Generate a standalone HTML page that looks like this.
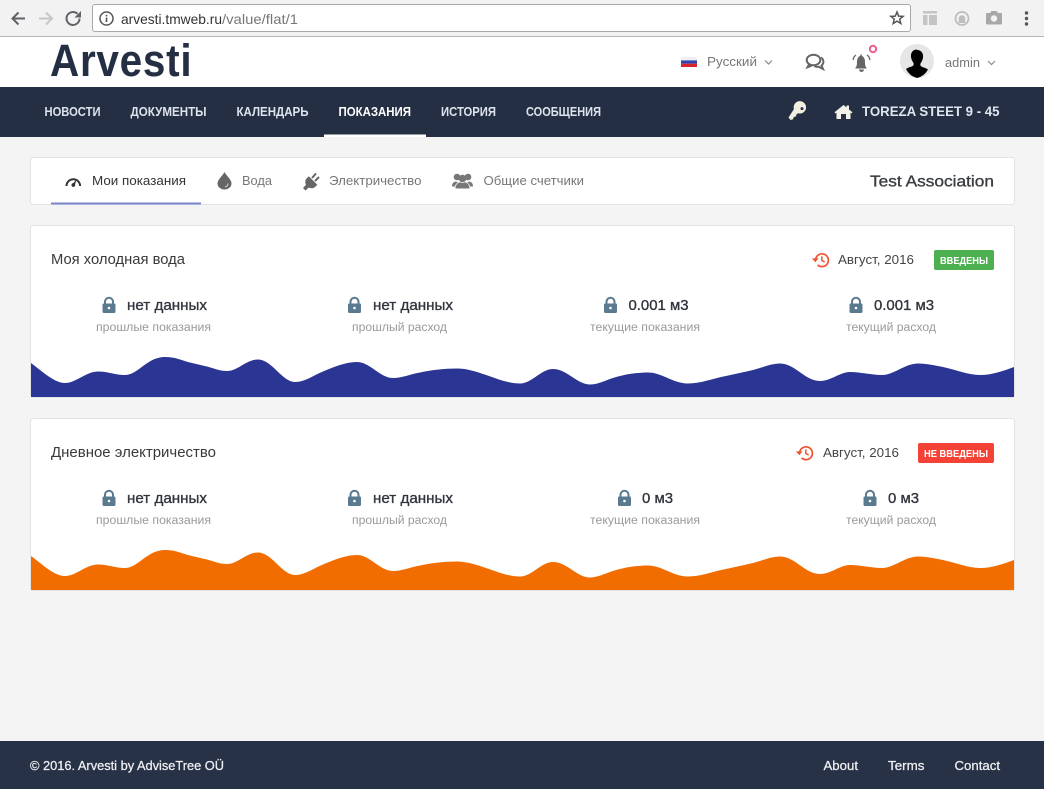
<!DOCTYPE html>
<html lang="ru">
<head>
<meta charset="utf-8">
<title>Arvesti</title>
<style>
html,body{margin:0;padding:0;background:#f4f4f4;width:1044px;height:789px;overflow:hidden}
svg{display:block;position:absolute;left:0;top:0}
text{font-family:"Liberation Sans",Arial,sans-serif;white-space:pre}
.nav{font-size:13px;font-weight:bold;fill:#dce3ec}
.tab{font-size:13px;fill:#777}
.val{font-size:14.5px;fill:#32353d;stroke:#32353d;stroke-width:.35px}
.sub{font-size:11.5px;fill:#9a9a9a}
.ttl{font-size:14.5px;fill:#3a3a3a}
.dt{font-size:13px;fill:#444}
.bdg{font-size:10px;font-weight:bold;fill:#fff}
.ft{font-size:13px;fill:#eef0f3;stroke:#eef0f3;stroke-width:.25px}
</style>
</head>
<body>
<svg width="1044" height="789" viewBox="0 0 1044 789" xmlns="http://www.w3.org/2000/svg">
<defs>
<path id="wave" d="M31 363C42 371 54 383 65 383C76 383 86 371.500 98 371.500C108 371.500 115 375 125 375C138 375 147 357 165 357C175 357 181 360 187 361.700C195 363.700 201 365 207 366.500C214 368.500 220 371 227 371C238 371 246 359.500 258 359.500C272 359.500 282 382 295 382C305 382 314 375 323 371.500C335 366.500 346 362 357 362C370 362 380 378 393 378C402 378 411 374 420 372.500C431 370 444 368.500 457 368.500C478 368.500 500 383.500 520 383.500C532 383.500 541 369 553 369C567 369 577 384.500 590 384.500C599 384.500 608 379 617 376.800C627 374 638 372.500 648 372.500C662 372.500 673 383.500 688 383.500C699 383.500 709 380 720 377.300C732 374.500 743 372.500 753 370C763 367.500 771 363.500 780 363.500C795 363.500 805 381 820 381C831 381 840 372 850 372C861 372 871 375 882 375C894 375 905 363.500 918 363.500C927 363.500 935 365.500 943 367C957 370 968 375 980 375C992 375 1003 371 1014 367V397H31Z"/>
<g id="lock"><path d="M3 7V4.800a4 4 0 0 1 8 0V7" fill="none" stroke="#5a7a90" stroke-width="2"/><rect x="0.500" y="6.500" width="13" height="9.500" rx="1.200" fill="#5a7a90"/><circle cx="7" cy="11" r="1.300" fill="#fff"/></g>
<g id="hist" fill="none" stroke="#f0532d" stroke-width="1.700"><path d="M3.600 8a6.400 6.400 0 1 1 2 4.900"/><path d="M0 6.400h6.600L3.300 10.200z" fill="#f0532d" stroke="none"/><path d="M9.800 4.400v4.100l2.900 1.400" stroke-width="1.500"/></g>
</defs>

<!-- browser chrome -->
<rect width="1044" height="37" fill="#f2f2f2"/>
<rect y="36" width="1044" height="1" fill="#b5b5b5"/>
<rect x="92.500" y="4.500" width="818" height="27" rx="2.500" fill="#fff" stroke="#a9a9a9"/>
<g fill="none" stroke="#5f6368" stroke-width="2">
<path d="M25 18.500H13M18.500 12.500l-6 6 6 6"/>
<path d="M39 18.500h12M46 12.500l6 6-6 6" stroke="#c6c6c6"/>
<path d="M79.500 18.500a6.500 6.500 0 1 1-2-4.700"/>
</g>
<path d="M81 11v6.500h-6.500z" fill="#5f6368"/>
<circle cx="106.500" cy="18.500" r="6.500" fill="none" stroke="#555" stroke-width="1.500"/>
<rect x="105.700" y="17.500" width="1.600" height="4.500" fill="#555"/><rect x="105.700" y="14.800" width="1.600" height="1.600" fill="#555"/>
<text x="121" y="24" font-size="14" fill="#333" textLength="101" lengthAdjust="spacingAndGlyphs">arvesti.tmweb.ru</text>
<text x="222" y="24" font-size="14" fill="#777" textLength="76" lengthAdjust="spacingAndGlyphs">/value/flat/1</text>
<path d="M897 12l1.700 4.100 4.400.3-3.400 2.800 1.100 4.300-3.800-2.400-3.800 2.400 1.100-4.300-3.400-2.800 4.400-.3z" fill="none" stroke="#555" stroke-width="1.500"/>
<path d="M923 11h14v2.500h-14zM923 15h4.500v10H923zM929 15h8v10h-8z" fill="#c4c4c4"/>
<circle cx="962" cy="18.500" r="6.500" fill="none" stroke="#bdbdbd" stroke-width="1.800"/><path d="M958.800 23v-4.500a3.200 3.200 0 0 1 6.400 0V23z" fill="#bdbdbd"/>
<path d="M987 13h3l1.500-2h5l1.500 2h3a1 1 0 0 1 1 1v9.500a1 1 0 0 1-1 1h-14a1 1 0 0 1-1-1V14a1 1 0 0 1 1-1z" fill="#a8a8a8"/><circle cx="994" cy="18.500" r="3.200" fill="#f2f2f2"/>
<circle cx="1026.500" cy="13" r="1.700" fill="#555"/><circle cx="1026.500" cy="18.500" r="1.700" fill="#555"/><circle cx="1026.500" cy="24" r="1.700" fill="#555"/>

<!-- header -->
<rect y="37" width="1044" height="50" fill="#fff"/>
<text transform="translate(50 76) scale(.9 1)" x="0" y="0" font-size="45" font-weight="bold" fill="#252f44" letter-spacing="0.800">Arvesti</text>
<rect x="681" y="57" width="16" height="3.400" fill="#eef0f5"/><rect x="681" y="60.400" width="16" height="3.300" fill="#3344b0"/><rect x="681" y="63.700" width="16" height="3.300" fill="#d9242a"/>
<text x="707" y="66" font-size="13" fill="#777" textLength="50" lengthAdjust="spacingAndGlyphs">Русский</text>
<path d="M765 60.500l3.500 3.500 3.500-3.500" fill="none" stroke="#888" stroke-width="1.200"/>
<g fill="none" stroke="#666" stroke-width="2">
<ellipse cx="813.500" cy="60" rx="6.800" ry="5.300"/>
<path d="M809 64.500l-1.500 2.800 4-1.600"/>
<path d="M821 57.500c3 2 3.200 6 .5 8l1.500 3.500-4.500-2.300c-1.500.3-3 .1-4-.5"/>
</g>
<path d="M855 68.500c1.500-1.500 2-3.500 2-6.500 0-3.800 1.700-5.700 3.300-6.300v-1.200a1.800 1.800 0 0 1 1.400 0v1.200c1.600.6 3.300 2.500 3.300 6.300 0 3 .5 5 2 6.500z" fill="#666"/>
<path d="M859 69.500h5a2.500 2.500 0 0 1-5 0z" fill="#666"/>
<path d="M856 55c-1.700 1.200-2.700 3-2.900 5M867 55c1.700 1.200 2.700 3 2.900 5" fill="none" stroke="#666" stroke-width="1.300"/>
<circle cx="873" cy="49" r="3.200" fill="#fff" stroke="#ec5f92" stroke-width="2"/>
<circle cx="917" cy="61" r="17" fill="#e6e6e6"/>
<path d="M917 49.500c-4.500 0-6.500 3.500-6 7.500.3 2.500 1.500 4.500 2.500 6 .4 1 .2 2-.5 2.700-1.500 1.100-5 1.600-7 3.300A17 17 0 0 0 917 78a17 17 0 0 0 11-8.500c-2-1.700-5.500-2.200-7-3.300-.7-.7-.9-1.700-.5-2.700 1-1.500 2.200-3.500 2.500-6 .5-4-1.500-7.500-6-7.500z" fill="#000"/>
<text x="945" y="67" font-size="13" fill="#777" textLength="35" lengthAdjust="spacingAndGlyphs">admin</text>
<path d="M988 61l3.500 3.500 3.500-3.500" fill="none" stroke="#888" stroke-width="1.200"/>

<!-- nav -->
<rect y="87" width="1044" height="50" fill="#252f44"/>
<text class="nav" x="44.500" y="116" textLength="56" lengthAdjust="spacingAndGlyphs">НОВОСТИ</text>
<text class="nav" x="130.500" y="116" textLength="76" lengthAdjust="spacingAndGlyphs">ДОКУМЕНТЫ</text>
<text class="nav" x="236.500" y="116" textLength="72" lengthAdjust="spacingAndGlyphs">КАЛЕНДАРЬ</text>
<text class="nav" x="338.500" y="116" textLength="72.500" lengthAdjust="spacingAndGlyphs" style="fill:#fff">ПОКАЗАНИЯ</text>
<text class="nav" x="441" y="116" textLength="55" lengthAdjust="spacingAndGlyphs">ИСТОРИЯ</text>
<text class="nav" x="526" y="116" textLength="75" lengthAdjust="spacingAndGlyphs">СООБЩЕНИЯ</text>
<rect x="324" y="134.500" width="102" height="2.500" fill="#fff"/>
<path d="M788.500 117.500l2 2.500 2.500-.8.800-2.200 2.200-.6.500-2.100 1.600-1a6.200 6.200 0 1 0-4.200-4.200z" fill="#f3efe0"/>
<circle cx="802" cy="108.600" r="1.500" fill="#252f44"/>
<path d="M843.500 105l3 2.400V105.500h2.500v4l3.500 2.800-1 1.200-1-.8v6.300h-4.500v-5h-5v5h-4.500v-6.300l-1 .8-1-1.200z" fill="#f3f1ea"/>
<text x="862" y="116" font-size="14" font-weight="bold" fill="#dfe6ee" textLength="137.500" lengthAdjust="spacingAndGlyphs">TOREZA STEET 9 - 45</text>

<!-- tabs panel -->
<rect x="30.500" y="157.500" width="984" height="47" rx="3" fill="#fff" stroke="#e3e3e3"/>
<rect x="51" y="202.500" width="150" height="2" fill="#7986cb"/>
<path d="M66.500 186a6.800 6.800 0 0 1 13.600 0" fill="none" stroke="#333" stroke-width="2"/>
<path d="M76.500 179.500l-3.200 3.600a1.900 1.900 0 1 0 1.800 1.200z" fill="#333"/>
<text x="92" y="185" font-size="13" fill="#333" textLength="94" lengthAdjust="spacingAndGlyphs">Мои показания</text>
<path d="M224.500 172c2 4 7 7.500 7 11.500a7 6 0 0 1-14 0c0-4 5-7.500 7-11.500z" fill="#666"/>
<path d="M228 183.500a3.500 3.500 0 0 1-3 3.500" fill="none" stroke="#ddd" stroke-width="1"/>
<text class="tab" x="242" y="185" textLength="30" lengthAdjust="spacingAndGlyphs">Вода</text>
<path d="M303 188l3-3.300c-1.200-2.500-.8-5 .8-6.500l2-2 8.500 8.500-2 2c-1.600 1.600-4 2-6.500.8l-3.300 3z" fill="#666"/>
<path d="M312 178l4-4.500M315 181l4-4" fill="none" stroke="#666" stroke-width="2"/>
<text class="tab" x="329" y="185" textLength="92.500" lengthAdjust="spacingAndGlyphs">Электричество</text>
<g fill="#777">
<circle cx="457" cy="177" r="3.300"/><circle cx="468" cy="177" r="3.300"/><circle cx="462.500" cy="178.500" r="3.800"/>
<path d="M452 186.500c0-3.500 2-4.800 4-5 1 .8 1.500 1 2 1-2 1-3 2.500-3 4z"/>
<path d="M473 186.500c0-3.500-2-4.800-4-5-1 .8-1.500 1-2 1 2 1 3 2.500 3 4z"/>
<path d="M455.500 188.500c0-4 2.500-6 4.700-6.300 1.500 1 3 1 4.600 0 2.200.3 4.700 2.300 4.700 6.300z"/>
</g>
<text class="tab" x="483.500" y="185" textLength="100.500" lengthAdjust="spacingAndGlyphs">Общие счетчики</text>
<text x="870" y="186.500" font-size="16" fill="#3a3d42" stroke="#3a3d42" stroke-width=".35" textLength="124" lengthAdjust="spacingAndGlyphs">Test Association</text>

<!-- card 1 -->
<rect x="30.500" y="225.500" width="984" height="172" rx="3" fill="#fff" stroke="#e3e3e3"/>
<text class="ttl" x="51" y="264" textLength="134" lengthAdjust="spacingAndGlyphs">Моя холодная вода</text>
<use href="#hist" x="812" y="252"/>
<text class="dt" x="838" y="264" textLength="76" lengthAdjust="spacingAndGlyphs">Август, 2016</text>
<rect x="934" y="250" width="60" height="20" rx="2" fill="#4caf50"/>
<text class="bdg" x="940" y="264" textLength="48" lengthAdjust="spacingAndGlyphs">ВВЕДЕНЫ</text>
<use href="#lock" x="102" y="297"/>
<text class="val" x="127" y="310" textLength="80" lengthAdjust="spacingAndGlyphs">нет данных</text>
<text class="sub" x="96" y="331" textLength="115" lengthAdjust="spacingAndGlyphs">прошлые показания</text>
<use href="#lock" x="347.500" y="297"/>
<text class="val" x="373" y="310" textLength="80" lengthAdjust="spacingAndGlyphs">нет данных</text>
<text class="sub" x="352" y="331" textLength="95" lengthAdjust="spacingAndGlyphs">прошлый расход</text>
<use href="#lock" x="603.500" y="297"/>
<text class="val" x="628.500" y="310" textLength="60" lengthAdjust="spacingAndGlyphs">0.001 м3</text>
<text class="sub" x="590" y="331" textLength="110" lengthAdjust="spacingAndGlyphs">текущие показания</text>
<use href="#lock" x="849" y="297"/>
<text class="val" x="874" y="310" textLength="60" lengthAdjust="spacingAndGlyphs">0.001 м3</text>
<text class="sub" x="846" y="331" textLength="90" lengthAdjust="spacingAndGlyphs">текущий расход</text>
<use href="#wave" fill="#2b3593"/>

<!-- card 2 -->
<rect x="30.500" y="418.500" width="984" height="172" rx="3" fill="#fff" stroke="#e3e3e3"/>
<text class="ttl" x="51" y="457" textLength="165" lengthAdjust="spacingAndGlyphs">Дневное электричество</text>
<use href="#hist" x="796" y="445"/>
<text class="dt" x="823" y="457" textLength="76" lengthAdjust="spacingAndGlyphs">Август, 2016</text>
<rect x="918" y="443" width="76" height="20" rx="2" fill="#f44336"/>
<text class="bdg" x="924" y="457" textLength="64" lengthAdjust="spacingAndGlyphs">НЕ ВВЕДЕНЫ</text>
<use href="#lock" x="102" y="490"/>
<text class="val" x="127" y="503" textLength="80" lengthAdjust="spacingAndGlyphs">нет данных</text>
<text class="sub" x="96" y="524" textLength="115" lengthAdjust="spacingAndGlyphs">прошлые показания</text>
<use href="#lock" x="347.500" y="490"/>
<text class="val" x="373" y="503" textLength="80" lengthAdjust="spacingAndGlyphs">нет данных</text>
<text class="sub" x="352" y="524" textLength="95" lengthAdjust="spacingAndGlyphs">прошлый расход</text>
<use href="#lock" x="617.500" y="490"/>
<text class="val" x="642" y="503" textLength="31" lengthAdjust="spacingAndGlyphs">0 м3</text>
<text class="sub" x="590" y="524" textLength="110" lengthAdjust="spacingAndGlyphs">текущие показания</text>
<use href="#lock" x="863" y="490"/>
<text class="val" x="888" y="503" textLength="31" lengthAdjust="spacingAndGlyphs">0 м3</text>
<text class="sub" x="846" y="524" textLength="90" lengthAdjust="spacingAndGlyphs">текущий расход</text>
<use href="#wave" y="193" fill="#f26d00"/>

<!-- footer -->
<rect y="741" width="1044" height="48" fill="#273246"/>
<text class="ft" x="30" y="770" textLength="194" lengthAdjust="spacingAndGlyphs">© 2016. Arvesti by AdviseTree OÜ</text>
<text class="ft" x="823.500" y="770" textLength="34.500" lengthAdjust="spacingAndGlyphs">About</text>
<text class="ft" x="888" y="770" textLength="36.500" lengthAdjust="spacingAndGlyphs">Terms</text>
<text class="ft" x="954.500" y="770" textLength="45.500" lengthAdjust="spacingAndGlyphs">Contact</text>
</svg>
</body>
</html>
